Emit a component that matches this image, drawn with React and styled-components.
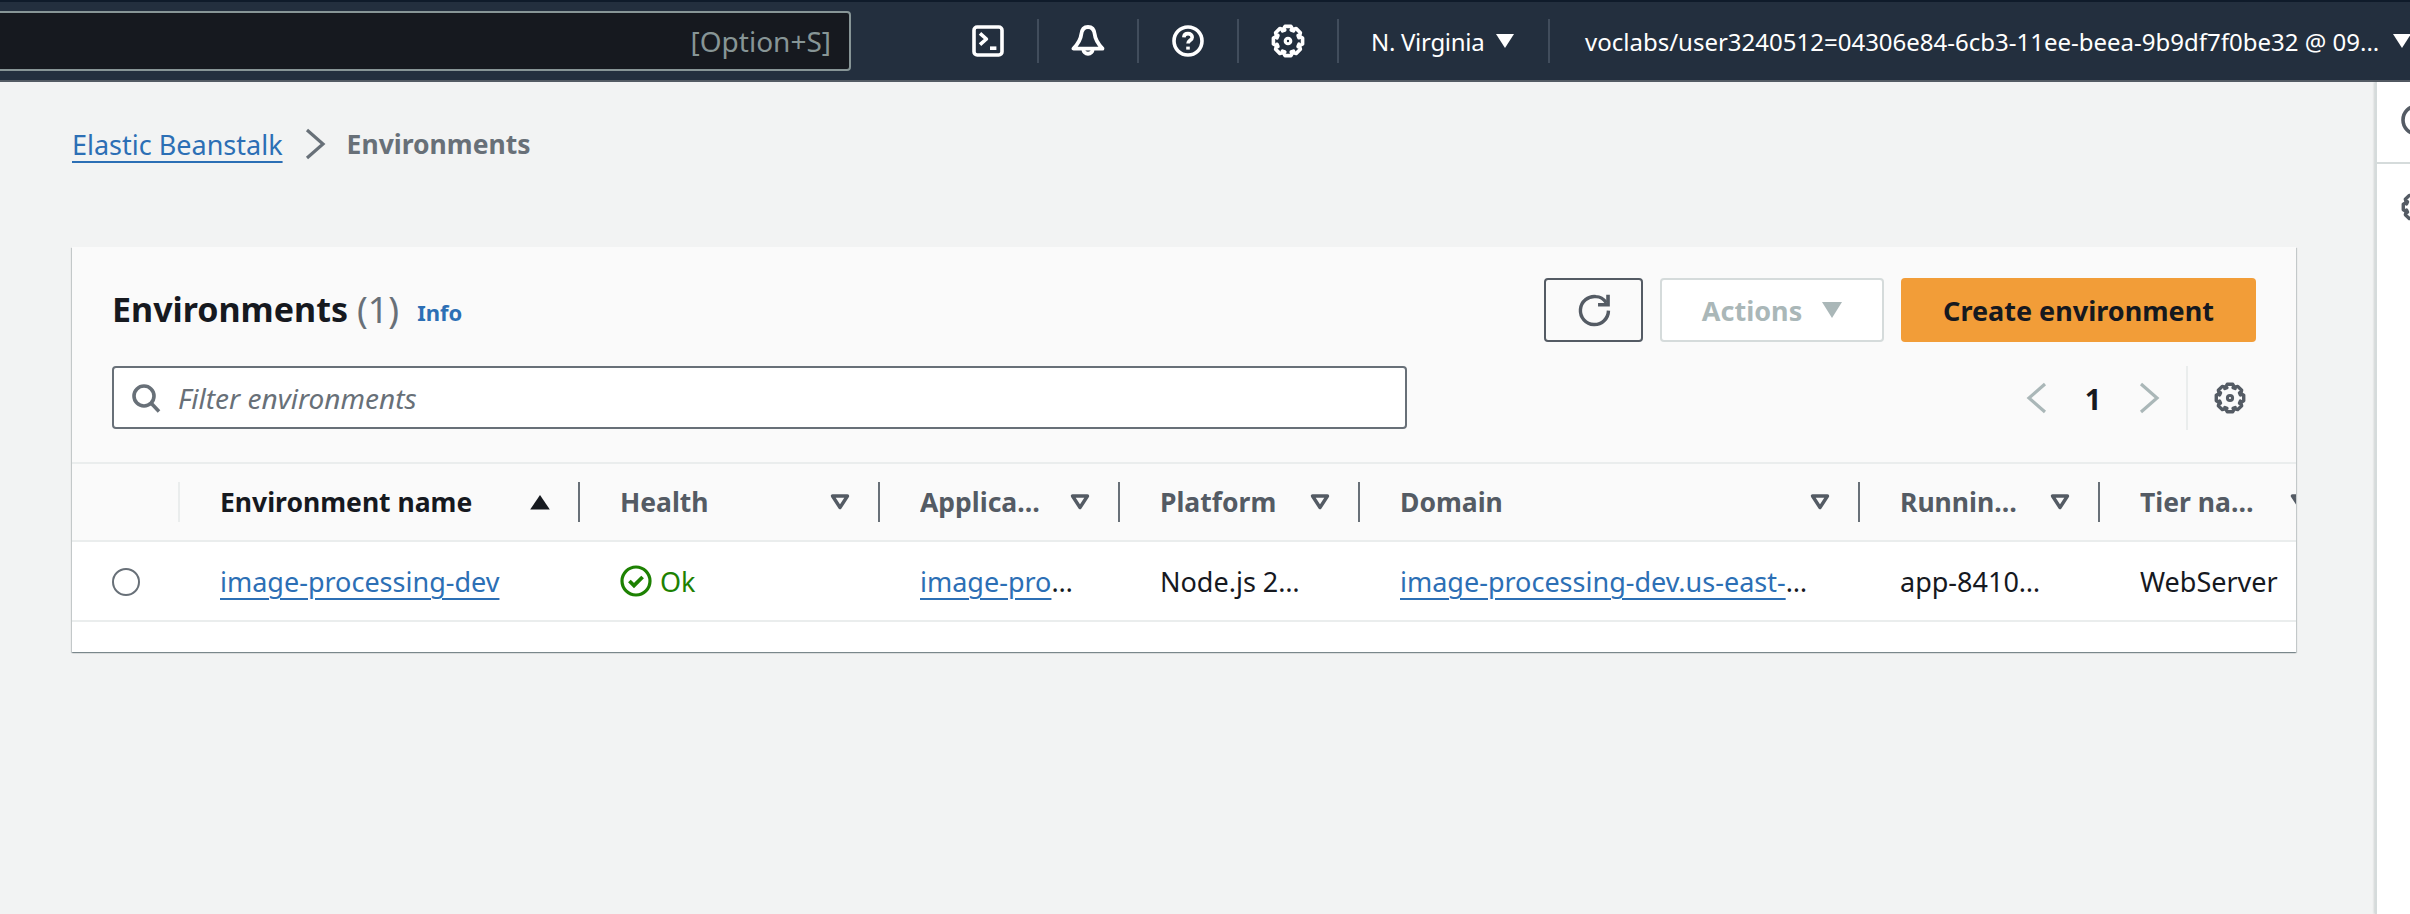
import React from "react"
import styled, { createGlobalStyle } from "styled-components"

const GlobalStyle = createGlobalStyle`
  html, body {
    margin: 0;
    padding: 0;
    height: 100%;
    overflow: hidden;
    background: #f2f3f3;
    font-family: "Noto Sans", "Open Sans", sans-serif;
    color: #16191f;
  }
  * {
    box-sizing: border-box;
  }
`

// 8 tooth gear outline, 16 unit grid
const gearPath = (() => {
  const pts = []
  for (let i = 0; i < 8; i++) {
    const a = (i * Math.PI) / 4 - Math.PI / 2
    const spread = [
      [-0.5, 5.4],
      [-0.2, 7],
      [0.2, 7],
      [0.5, 5.4],
    ]
    spread.forEach(([d, r]) => {
      pts.push(`${(8 + r * Math.cos(a + d)).toFixed(2)} ${(8 + r * Math.sin(a + d)).toFixed(2)}`)
    })
  }
  return `M${pts.join("L")}Z`
})()

const GearIcon = ({ size = 32 }) => (
  <svg width={size} height={size} viewBox="0 0 16 16" fill="none" stroke="currentColor" strokeWidth="1.7" strokeLinejoin="round">
    <path d={gearPath} />
    <circle cx="8" cy="8" r="1.3" strokeWidth="1.5" />
  </svg>
)

const TerminalIcon = () => (
  <svg width="32" height="32" viewBox="0 0 16 16" fill="none" stroke="currentColor" strokeWidth="1.8" strokeLinejoin="round">
    <rect x="1" y="1" width="14" height="14" rx="1.6" />
    <path d="M4 4.2 7.2 7 4 9.8" />
    <path d="M9 11.6h3.2" />
  </svg>
)

const BellIcon = () => (
  <svg width="34" height="34" viewBox="0 0 16 16" fill="none" stroke="currentColor" strokeWidth="1.8" strokeLinejoin="round">
    <path d="M8 1.4c-2.2 0-3 1.8-3.2 3.6C4.600 7.400 3 9.600 1.200 11.600h13.600C13 9.600 11.400 7.400 11.200 5 11 3.200 10.200 1.400 8 1.400Z" />
    <path d="M5.800 11.800a2.200 2.200 0 1 0 4.400 0" />
  </svg>
)

const HelpIcon = () => (
  <svg width="32" height="32" viewBox="0 0 16 16" fill="none" stroke="currentColor" strokeWidth="1.8">
    <circle cx="8" cy="8" r="7" />
    <path d="M5.900 6.200C6 4.900 6.900 4.300 8 4.300c1.200 0 2.100.8 2.100 1.800 0 1.500-2.100 1.600-2.100 3.200" />
    <path d="M8 10.800v1.500" />
  </svg>
)

const SearchIcon = () => (
  <svg width="32" height="32" viewBox="0 0 16 16" fill="none" stroke="currentColor" strokeWidth="1.8">
    <circle cx="7" cy="7" r="5" />
    <path d="m10.500 10.500 4 4.200" />
  </svg>
)

const RefreshIcon = () => (
  <svg width="34" height="34" viewBox="0 0 16 16" fill="none" stroke="currentColor" strokeWidth="1.6">
    <path d="M14.800 8.300A6.600 6.600 0 1 1 9 1.700C10.600 1.700 12.400 2.600 13.800 4.600" />
    <path d="M14.600.8v4.700H9.900" strokeWidth="1.700" />
  </svg>
)

const ChevronIcon = ({ dir = "right", size = 32 }) => (
  <svg width={size} height={size} viewBox="0 0 16 16" fill="none" stroke="currentColor" strokeWidth="1.6">
    <path d={dir === "right" ? "M4 1l8 7-8 7" : "M12 1 4 8l8 7"} />
  </svg>
)

const OkIcon = () => (
  <svg width="32" height="32" viewBox="0 0 16 16" fill="none" stroke="currentColor" strokeWidth="1.600">
    <circle cx="8" cy="8" r="7" />
    <path d="M4.700 8 7 10.300l4.300-4.300" strokeWidth="1.900" />
  </svg>
)

const SortIcon = ({ active }) => (
  <SortSvg viewBox="0 0 20 16">
    {active ? (
      <path d="M10 1 19.800 15.500H.2Z" fill="#16191f" />
    ) : (
      <path d="M2.500 2h15L10 13.500Z" fill="none" stroke="#545b64" strokeWidth="3.400" strokeLinejoin="round" />
    )}
  </SortSvg>
)

const SortSvg = styled.svg`
  flex: none;
  width: 20px;
  height: 16px;
`

const Page = styled.div`
  width: 100vw;
  height: 100vh;
  display: flex;
  flex-direction: column;
  overflow: hidden;
`

const TopBar = styled.header`
  flex: none;
  height: 82px;
  display: flex;
  align-items: center;
  background: #232f3e;
  border-top: 2px solid #0f1b2a;
  border-bottom: 2px solid #545b64;
  color: #fff;
  white-space: nowrap;
`

const SearchBox = styled.div`
  flex: none;
  width: 861px;
  height: 60px;
  margin-left: -10px;
  margin-right: 88px;
  padding-right: 18px;
  display: flex;
  align-items: center;
  justify-content: flex-end;
  background: #16191f;
  border: 2px solid #879596;
  border-radius: 4px;
  color: #879596;
  font-size: 28px;
`

const BarIcon = styled.div`
  flex: none;
  width: 100px;
  height: 44px;
  display: flex;
  align-items: center;
  justify-content: center;
  border-right: 2px solid #414d5c;
`

const RegionMenu = styled.div`
  flex: none;
  width: 211px;
  height: 44px;
  padding-left: 32px;
  display: flex;
  align-items: center;
  gap: 12px;
  font-size: 24px;
  letter-spacing: -0.3px;
  border-right: 2px solid #414d5c;
`

const AccountMenu = styled.div`
  flex: none;
  padding-left: 35px;
  display: flex;
  align-items: center;
  gap: 14px;
  font-size: 24px;
`

const Caret = styled.span`
  flex: none;
  width: 0;
  height: 0;
  border-left: 9px solid transparent;
  border-right: 9px solid transparent;
  border-top: 14px solid ${(p) => p.$color || "#fff"};
`

const Body = styled.div`
  flex: 1;
  display: flex;
  min-height: 0;
`

const Main = styled.main`
  flex: 1;
  min-width: 0;
  padding: 43px 79px 0 72px;
`

const SidePanel = styled.aside`
  flex: none;
  width: 35px;
  background: #fff;
  border-left: 2px solid #d5dbdb;
  box-shadow: -1px 0 2px rgba(0, 25, 30, 0.15);
  overflow: hidden;
`

const SideItem = styled.div`
  height: ${(p) => p.$height}px;
  padding: ${(p) => p.$top}px 0 0 24px;
  color: #545b64;
  border-bottom: ${(p) => (p.$divided ? "2px solid #d5dbdb" : "none")};
`

const Breadcrumbs = styled.nav`
  height: 38px;
  display: flex;
  align-items: center;
  gap: 16px;
  font-size: 27px;
`

const CrumbLink = styled.a`
  color: #2c6fb5;
  text-decoration: underline;
  text-decoration-thickness: 2px;
  text-underline-offset: 6px;
`

const CrumbCurrent = styled.span`
  color: #687078;
  font-size: 26.500px;
  font-weight: 700;
`

const CrumbArrow = styled.span`
  display: flex;
  color: #687078;
`

const Card = styled.section`
  margin-top: 84px;
  background: #fff;
  box-shadow: 0 1px 1px 0 rgba(0, 28, 36, 0.3), 1px 1px 1px 0 rgba(0, 28, 36, 0.15), -1px 1px 1px 0 rgba(0, 28, 36, 0.15);
  height: 405px;
  overflow: hidden;
`

const CardHead = styled.div`
  height: 215px;
  padding: 31px 40px 0;
  background: #fafafa;
  display: grid;
  grid-template-columns: 1fr auto;
  align-content: start;
  row-gap: 24px;
`

const TitleRow = styled.div`
  height: 64px;
  display: flex;
  align-items: center;
`

const Title = styled.h2`
  margin: 0 0 2px;
  font-size: 34px;
  font-weight: 700;
  color: #16191f;
`

const Count = styled.span`
  margin: 0 0 2px 9px;
  font-size: 36px;
  color: #687078;
`

const InfoLink = styled.a`
  margin: 4px 0 0 18px;
  font-size: 22px;
  font-weight: 700;
  color: #2c6fb5;
`

const Actions = styled.div`
  display: flex;
  gap: 17px;
`

const Button = styled.button`
  height: 64px;
  display: flex;
  align-items: center;
  justify-content: center;
  border-radius: 4px;
  font: 700 27px "Noto Sans", sans-serif;
`

const IconButton = styled(Button)`
  width: 99px;
  background: #fafafa;
  border: 2px solid #545b64;
  color: #545b64;
`

const DisabledButton = styled(Button)`
  width: 224px;
  gap: 20px;
  background: #fff;
  border: 2px solid #d5dbdb;
  color: #aab7b8;

  ${Caret} {
    border-left-width: 10px;
    border-right-width: 10px;
    border-top-width: 16px;
  }
`

const PrimaryButton = styled(Button)`
  width: 355px;
  background: #f29d38;
  border: none;
  color: #16191f;
`

const FilterBox = styled.div`
  width: 1295px;
  height: 63px;
  padding-left: 16px;
  display: flex;
  align-items: center;
  gap: 16px;
  background: #fff;
  border: 2px solid #687078;
  border-radius: 4px;
  color: #687078;
  font-size: 28px;
  font-style: italic;
`

const Pager = styled.div`
  height: 64px;
  padding-right: 10px;
  display: flex;
  align-items: center;
  justify-content: flex-end;
  color: #aab7b8;
`

const PageNumber = styled.span`
  width: 80px;
  text-align: center;
  color: #16191f;
  font-size: 29px;
  font-weight: 700;
`

const PagerSettings = styled.div`
  height: 64px;
  margin-left: 21px;
  padding-left: 26px;
  display: flex;
  align-items: center;
  border-left: 2px solid #eaeded;
  color: #545b64;
`

const Grid = styled.div`
  display: grid;
  grid-template-columns: 108px 400px 300px 240px 240px 500px 240px 240px;
  width: max-content;
  height: 80px;
  align-items: center;
  border-top: ${(p) => (p.$head ? "2px solid #eaeded" : "none")};
  border-bottom: 2px solid #eaeded;
  background: ${(p) => (p.$head ? "#fafafa" : "#fff")};
  font-size: 27px;
`

const HeadCell = styled.div`
  height: 40px;
  padding: 0 ${(p) => (p.$sortless ? 0 : 28)}px 0 40px;
  display: flex;
  align-items: center;
  justify-content: space-between;
  gap: 20px;
  min-width: 0;
  border-right: 2px solid ${(p) => (p.$light ? "#eaeded" : "#687078")};
  font-size: 26.500px;
  font-weight: 700;
  color: ${(p) => (p.$active ? "#16191f" : "#545b64")};
`

const HeadText = styled.span`
  min-width: 0;
  overflow: hidden;
  white-space: nowrap;
  text-overflow: ellipsis;
`

const Cell = styled.div`
  padding: 0 ${(p) => p.$pad || 40}px 0 40px;
  min-width: 0;
  overflow: hidden;
  white-space: nowrap;
  text-overflow: ellipsis;
  color: #16191f;
`

const RadioCell = styled.div`
  padding: 2px 0 0 40px;
  display: flex;
`

const Radio = styled.span`
  width: 28px;
  height: 28px;
  border: 2px solid #687078;
  border-radius: 50%;
  background: #fff;
`

const TableLink = styled.a`
  color: #2c6fb5;
  text-decoration: underline;
  text-decoration-thickness: 2px;
  text-underline-offset: 6px;
`

const Status = styled.span`
  display: flex;
  align-items: center;
  gap: 8px;
  color: #1d8102;
`

const columns = [
  { label: "Environment name", active: true },
  { label: "Health" },
  { label: "Application name" },
  { label: "Platform" },
  { label: "Domain" },
  { label: "Running versions" },
  { label: "Tier name" },
]

const App = () => {
  return (
    <Page>
      <GlobalStyle />
      <TopBar>
        <SearchBox>[Option+S]</SearchBox>
        <BarIcon><TerminalIcon /></BarIcon>
        <BarIcon><BellIcon /></BarIcon>
        <BarIcon><HelpIcon /></BarIcon>
        <BarIcon><GearIcon size={34} /></BarIcon>
        <RegionMenu>N. Virginia <Caret /></RegionMenu>
        <AccountMenu>voclabs/user3240512=04306e84-6cb3-11ee-beea-9b9df7f0be32 @ 09... <Caret /></AccountMenu>
      </TopBar>
      <Body>
        <Main>
          <Breadcrumbs>
            <CrumbLink>Elastic Beanstalk</CrumbLink>
            <CrumbArrow><ChevronIcon /></CrumbArrow>
            <CrumbCurrent>Environments</CrumbCurrent>
          </Breadcrumbs>
          <Card>
            <CardHead>
              <TitleRow>
                <Title>Environments</Title>
                <Count>(1)</Count>
                <InfoLink>Info</InfoLink>
              </TitleRow>
              <Actions>
                <IconButton><RefreshIcon /></IconButton>
                <DisabledButton>Actions <Caret $color="#aab7b8" /></DisabledButton>
                <PrimaryButton>Create environment</PrimaryButton>
              </Actions>
              <FilterBox>
                <SearchIcon />
                Filter environments
              </FilterBox>
              <Pager>
                <ChevronIcon dir="left" />
                <PageNumber>1</PageNumber>
                <ChevronIcon />
                <PagerSettings><GearIcon /></PagerSettings>
              </Pager>
            </CardHead>
            <Grid $head>
              <HeadCell $light $sortless />
              {columns.map((c) => (
                <HeadCell key={c.label} $active={c.active}>
                  <HeadText>{c.label}</HeadText>
                  <SortIcon active={c.active} />
                </HeadCell>
              ))}
            </Grid>
            <Grid>
              <RadioCell><Radio /></RadioCell>
              <Cell><TableLink>image-processing-dev</TableLink></Cell>
              <Cell><Status><OkIcon /> Ok</Status></Cell>
              <Cell><TableLink>image-processing-dev</TableLink></Cell>
              <Cell $pad={56}>Node.js 20 running on 64bit Amazon Linux</Cell>
              <Cell><TableLink>image-processing-dev.us-east-1.elasticbeanstalk.com</TableLink></Cell>
              <Cell $pad={54}>app-841024-153021</Cell>
              <Cell>WebServer</Cell>
            </Grid>
          </Card>
        </Main>
        <SidePanel>
          <SideItem $height={82} $top={22} $divided><HelpIcon /></SideItem>
          <SideItem $height={90} $top={27}><GearIcon /></SideItem>
        </SidePanel>
      </Body>
    </Page>
  )
}

export default App
